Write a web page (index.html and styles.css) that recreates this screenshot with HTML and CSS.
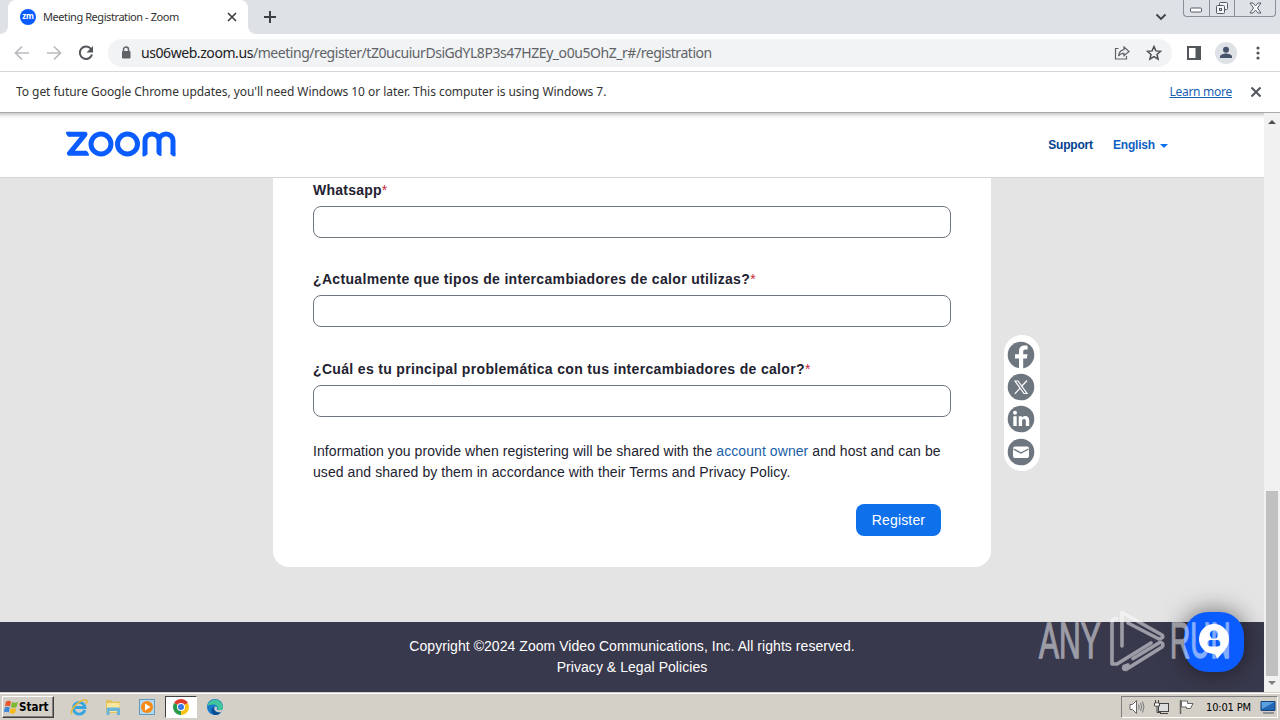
FILE: index.html
```html
<!DOCTYPE html>
<html lang="en">
<head>
    <meta charset="UTF-8">
    <title>Meeting Registration - Zoom</title>
    <link rel="stylesheet" href="styles.css">
</head>
<body>
    <!-- Browser tabs -->
    <div class="tab-strip">
        <div class="tab-prev"></div>
        <div class="tab">
            <span class="favicon">zm</span>
            <span class="tab-title">Meeting Registration - Zoom</span>
            <svg class="tab-close" width="10" height="10" viewBox="0 0 10 10"><path d="M1 1l8 8M9 1L1 9" stroke="#3c4043" stroke-width="1.7"/></svg>
        </div>
        <div class="tab-next"><svg width="12" height="12" viewBox="0 0 12 12"><path d="M6 0v12M0 6h12" stroke="#3c4043" stroke-width="2"/></svg></div>
        <svg class="tab-search" width="12" height="8" viewBox="0 0 12 8"><path d="M1.5 1.5L6 6l4.500-4.500" fill="none" stroke="#3c4043" stroke-width="1.8"/></svg>
        <div class="win-btns">
            <div class="win-btn"><svg width="13" height="6" viewBox="0 0 13 6"><rect x=".5" y="1" width="11" height="4" rx="1" fill="#fff" stroke="#555b66"/></svg></div>
            <div class="win-btn"><svg width="14" height="14" viewBox="0 0 14 14"><g fill="#f4f5f7" stroke="#555b66"><rect x="4.500" y="1.500" width="8" height="7" rx="1"/><rect x="1.500" y="4.500" width="8" height="8" rx="1"/><rect x="4.500" y="7.500" width="2" height="2"/></g></svg></div>
            <div class="win-btn win-close"><svg width="13" height="12" viewBox="0 0 13 12"><path d="M1 1h3l2.500 3L9 1h3L8.500 6l3.500 5H9L6.500 8 4 11H1l3.500-5z" fill="#fff" stroke="#555b66"/></svg></div>
        </div>
    </div>

    <!-- Address bar -->
    <div class="toolbar">
        <svg class="nav-icon" width="16" height="16" viewBox="0 0 16 16"><path d="M15 8H2M8 1.500L1.500 8 8 14.500" fill="none" stroke="#b8babd" stroke-width="1.700"/></svg>
        <svg class="nav-icon" width="16" height="16" viewBox="0 0 16 16"><path d="M1 8h13M8 1.500L14.500 8 8 14.500" fill="none" stroke="#b8babd" stroke-width="1.700"/></svg>
        <svg class="nav-icon" width="16" height="16" viewBox="0 0 16 16"><path d="M13 4A6.200 6.200 0 1 0 14 9.500" fill="none" stroke="#53565a" stroke-width="2"/><path d="M15 1v6.500H8.500z" fill="#53565a"/></svg>
        <div class="url-box">
            <svg width="10" height="14" viewBox="0 0 10 14"><path d="M2.500 6V3.500a2.500 2.500 0 0 1 5 0V6" fill="none" stroke="#5f6368" stroke-width="1.500"/><rect x="1" y="5" width="8.500" height="7.500" rx="1" fill="#5f6368"/></svg>
            <div class="url"><span class="host">us06web.zoom.us</span><span class="path">/meeting/register/tZ0ucuiurDsiGdYL8P3s47HZEy_o0u5OhZ_r#/registration</span></div>
            <svg class="share" width="16" height="16" viewBox="0 0 16 16"><path d="M4.500 3.500H1.500V14h11v-3" fill="none" stroke="#5f6368" stroke-width="1.200"/><path d="M10 2l5 4.500-5 4.300V8.300C7.500 8.200 5.800 9 4.500 11 5 7.500 6.800 5.200 10 4.700z" fill="none" stroke="#5f6368" stroke-width="1.200"/></svg>
            <svg width="16" height="16" viewBox="0 0 16 16"><path d="M8 1.500l1.900 4.400 4.700.4-3.600 3.100 1.100 4.700L8 11.600l-4.100 2.500L5 9.400 1.400 6.300l4.700-.4z" fill="none" stroke="#4d5156" stroke-width="1.500"/></svg>
        </div>
        <svg class="panel-icon" width="14" height="14" viewBox="0 0 14 14"><rect x="1" y="1" width="12" height="12" fill="none" stroke="#53565a" stroke-width="2"/><path d="M8.500 1H13v12H8.500z" fill="#53565a"/></svg>
        <svg class="avatar" width="22" height="22" viewBox="0 0 22 22"><circle cx="11" cy="11" r="11" fill="#dee1e6"/><circle cx="11" cy="7.800" r="3" fill="#47536b"/><path d="M5 16v-1.500c0-2 4-3 6-3s6 1 6 3V16z" fill="#47536b"/></svg>
        <svg class="dots" width="4" height="14" viewBox="0 0 4 14"><g fill="#53565a"><circle cx="2" cy="2" r="1.600"/><circle cx="2" cy="7" r="1.600"/><circle cx="2" cy="12" r="1.600"/></g></svg>
    </div>

    <div class="infobar">
        <span class="info-text">To get future Google Chrome updates, you'll need Windows 10 or later. This computer is using Windows 7.</span>
        <a class="learn-more">Learn more</a>
        <svg width="12" height="12" viewBox="0 0 12 12"><path d="M1.500 1.500l9 9M10.500 1.500l-9 9" stroke="#53565a" stroke-width="2"/></svg>
    </div>

    <div class="viewport">
        <div class="page">
            <header class="header">
                <svg class="logo" width="110" height="26" viewBox="0 0 110 26">
                    <g fill="none" stroke="#0b5cff" stroke-width="5">
                        <path d="M2.500 3.300H19L3.500 22.300H20" stroke-linejoin="round"/>
                        <circle cx="35" cy="13" r="10"/>
                        <circle cx="61.500" cy="13" r="10"/>
                        <path d="M79 23V9.500a7 6.500 0 0 1 14 0v11M93 9.500a7 6.500 0 0 1 14 0V23"/>
                    </g>
                    <path d="M0 .8h4v5C1.500 5.800 0 4 0 .8zM19 19.800c2.500 0 4 2 4 5h-4zM76.500 22h5c0 2.200-2 3.500-5 3.500zM104.500 22h5v3.500c-3 0-5-1.300-5-3.500zM90.500 20h5v5c-3 0-5-1.800-5-4z" fill="#0b5cff"/>
                </svg>
                <a class="support">Support</a>
                <a class="language">English</a>
                <span class="caret"></span>
            </header>

            <main class="main">
                <div class="card">
                    <div class="field">
                        <label>Whatsapp<span class="req">*</span></label>
                        <input type="text">
                    </div>
                    <div class="field field-2">
                        <label class="question">¿Actualmente que tipos de intercambiadores de calor utilizas?<span class="req">*</span></label>
                        <input type="text">
                    </div>
                    <div class="field field-3">
                        <label class="question">¿Cuál es tu principal problemática con tus intercambiadores de calor?<span class="req">*</span></label>
                        <input type="text">
                    </div>
                    <p class="notice">Information you provide when registering will be shared with the <a>account owner</a> and host and can be<br>used and shared by them in accordance with their Terms and Privacy Policy.</p>
                    <button class="register">Register</button>
                </div>

                <div class="share-bar">
                    <svg width="28" height="28" viewBox="0 0 28 28"><circle cx="14" cy="14" r="13.300" fill="#6e7680"/><path d="M12 28V17.500H8v-4.200h4v-3c0-4 2.200-5.900 5.600-5.900 1.500 0 2.500.2 3 .3v3.900h-2c-1.800 0-2.400.8-2.400 2.200v2.500h4.300l-.7 4.200h-3.600V28z" fill="#fff"/></svg>
                    <svg width="28" height="28" viewBox="0 0 28 28"><circle cx="14" cy="14" r="13.300" fill="#6e7680"/><path d="M8 8h3l9 12.500h-3z" fill="none" stroke="#fff" stroke-width="1.200"/><path d="M20 7.500l-5.500 6M13 15.200L7.800 20.800" stroke="#fff" stroke-width="1.200"/></svg>
                    <svg class="linkedin" width="28" height="28" viewBox="0 0 28 28"><circle cx="14" cy="14" r="13.300" fill="#6e7680"/><g fill="#fff"><circle cx="8" cy="7.800" r="2"/><path d="M6.300 11.200h3.400V21H6.300zM11.700 11.200h3.200v1.400c.8-1.200 1.900-1.700 3.200-1.700 2.900 0 4.100 1.700 4.100 4.600V21h-3.400v-4.900c0-1.500-.5-2.200-1.600-2.200-1.300 0-2.100.9-2.100 2.200V21h-3.400z"/></g></svg>
                    <svg width="28" height="28" viewBox="0 0 28 28"><circle cx="14" cy="14" r="13.300" fill="#6e7680"/><rect x="6" y="8.500" width="16" height="11.500" rx="2" fill="#fff"/><path d="M6.500 11l7.500 4 7.500-4" fill="none" stroke="#6e7680" stroke-width="1.400"/></svg>
                </div>
            </main>

            <footer class="footer">
                <div class="copyright">Copyright ©2024 Zoom Video Communications, Inc. All rights reserved.</div>
                <div class="policies">Privacy &amp; Legal Policies</div>
            </footer>

            <div class="chat-btn">
                <svg width="32" height="36" viewBox="0 0 32 36"><path d="M16 1a15 15 0 0 1 15 15c0 8-5 12-12 20l-2-5h-1A15 15 0 0 1 16 1z" fill="#fff"/><circle cx="16" cy="11.500" r="4.200" fill="#0b5cff"/><rect x="9.500" y="17" width="13" height="6.500" rx="3.200" fill="#0b5cff"/></svg>
            </div>
            <div class="watermark">
                <span class="mark-text">ANY</span>
                <svg width="57" height="64" viewBox="0 0 57 64"><g fill="none" stroke="#fff" stroke-width="3.600" stroke-linejoin="round" stroke-linecap="round"><path d="M13 37V3.500l40 22.500q2.500 3-3 4L19 14"/><path d="M7.500 9.500Q3 10 3 13.500V55h5l34-21"/><path d="M19 56l-4 1.500q-1.500 3 2 3L53 38q2.500-3-1.500-5L24 49.500"/></g></svg>
                <span class="mark-text run">RUN</span>
            </div>
        </div>
        <div class="scrollbar">
            <span class="arrow-up"></span>
            <div class="thumb"></div>
            <span class="arrow-down"></span>
        </div>
    </div>

    <!-- Windows taskbar -->
    <div class="taskbar">
        <div class="start">
            <svg width="16" height="16" viewBox="0 0 16 16"><path d="M3 2.500c2-1 3.500-1 5 0L7 7.500c-1.500-1-3-1-5 0z" fill="#e8562a"/><path d="M9 3c2 1 3.500 1 6 0l-1.500 5c-2 1-4 1-5.500 0z" fill="#7db72f"/><path d="M1.800 8.500c2-1 3.500-1 5 0l-1 5c-1.500-1-3-1-5 0z" fill="#3f87d9"/><path d="M7.800 9c2 1 3.500 1 5.500 0L12 14c-2 1-3.500 1-5.300 0z" fill="#f6b91d"/></svg>
            <span>Start</span>
        </div>
        <div class="task">
            <svg width="18" height="18" viewBox="0 0 18 18"><path d="M14.800 12A5.800 5.800 0 1 1 15 9.500H5" fill="none" stroke="#36a5de" stroke-width="2.800"/><path d="M2 16C-1 12 10 1 16 2c1.500.5 1 2.500 0 4" fill="none" stroke="#e8b93b" stroke-width="1.500"/></svg>
        </div>
        <div class="task">
            <svg width="18" height="18" viewBox="0 0 18 18"><path d="M2 2h5l1 1.500h8V15H2z" fill="#e3c15e"/><path d="M3 5h12.500v9H3z" fill="#f8e79c"/><path d="M2.500 17v-6q0-1.500 1.500-1.500h10.500Q16 9.500 16 11v6h-3v-4H5.500v4z" fill="#68b5d9"/></svg>
        </div>
        <div class="task">
            <svg width="18" height="18" viewBox="0 0 18 18"><rect x="1.500" y="1.500" width="15" height="15" fill="#b9d7ec" stroke="#5c9cc7"/><circle cx="9" cy="9" r="6" fill="#f48b16"/><path d="M7 5.500l5.500 3.500L7 12.500z" fill="#fff"/></svg>
        </div>
        <div class="task active">
            <svg width="18" height="18" viewBox="0 0 18 18"><path d="M9 9L2.100 5A8 8 0 0 1 15.900 5z" fill="#e33b2e"/><path d="M9 9l6.900-4A8 8 0 0 1 9 17z" fill="#fbc116"/><path d="M9 9v8A8 8 0 0 1 2.100 5z" fill="#269a48"/><circle cx="9" cy="9" r="4" fill="#fff"/><circle cx="9" cy="9" r="3" fill="#3b78e7"/></svg>
        </div>
        <div class="task">
            <svg width="18" height="18" viewBox="0 0 18 18"><circle cx="9" cy="9" r="8" fill="#1679c9"/><path d="M1.500 7A8 8 0 0 1 17 9c0 3-3 4-5.500 3C13 9 10 6 6.500 6.500 4 7 2 8 1.500 7z" fill="#41c59b"/><path d="M8 9c-1 3 1.500 6 7 5.500A8 8 0 0 1 9 17c-4-1-5-6-1-8z" fill="#0c4c93"/><path d="M9 8.500c2 0 2.500 1 1.500 3 1.500 1 4 1 7-.5l-2.500 3c-5 1-8-2.500-6-5.500z" fill="#d4d0c8"/></svg>
        </div>
        <div class="tray">
            <svg width="16" height="16" viewBox="0 0 16 16"><path d="M1 5.500h2.500L7.500 1.500v13l-4-4H1z" fill="#fff" stroke="#666"/><path d="M9.500 5.500q1.500 2.500 0 5M11.500 4q2.500 4 0 8M13.500 2.500q3 5.500 0 11" fill="none" stroke="#777"/></svg>
            <svg width="17" height="16" viewBox="0 0 17 16"><rect x="5.500" y="4.500" width="10" height="8" fill="#ddd" stroke="#444"/><path d="M7 14.500h8M2.500 1v3M5.500 1v3M1.500 4h5v3h-5zM4 7v6.500h4" fill="none" stroke="#444"/><path d="M2 4.500h4v2H2z" fill="#fff"/></svg>
            <svg width="17" height="16" viewBox="0 0 17 16"><path d="M2.500 1v14" stroke="#666" stroke-width="1.500"/><path d="M3.500 2h6v2.500h5.500l-2.500 5H8.500V8h-5z" fill="#fff" stroke="#666"/></svg>
            <span class="clock">10:01 PM</span>
            <svg width="16" height="14" viewBox="0 0 16 14"><path d="M1 1.500h14v9H1z" fill="#2365b5" stroke="#16437c"/><path d="M1.500 2h13L2 9z" fill="#5ba1df"/><path d="M3 13h11" stroke="#456"/></svg>
        </div>
    </div>
</body>
</html>
```
FILE: styles.css
```css
* {
    box-sizing: border-box;
}
body {
    margin: 0;
    height: 720px;
    display: flex;
    flex-direction: column;
    overflow: hidden;
    background: #fff;
    font-family: "Liberation Sans", Arial, sans-serif;
}
svg {
    display: block;
    flex-shrink: 0;
}

/* Browser tabs */
.tab-strip {
    height: 34px;
    display: flex;
    background: #fff;
    font-family: "Noto Sans", Tahoma, sans-serif;
}
.tab-prev {
    width: 8px;
    background: #dee1e6;
    border-bottom-right-radius: 8px;
}
.tab {
    width: 240px;
    display: flex;
    align-items: center;
    padding: 0 11px 0 12px;
    background: linear-gradient(#dee1e6 8px, #fff 8px);
    position: relative;
}
.tab::before {
    content: "";
    position: absolute;
    inset: 0;
    background: #fff;
    border-radius: 8px 8px 0 0;
}
.tab > * {
    position: relative;
}
.favicon {
    width: 16px;
    height: 16px;
    border-radius: 50%;
    background: #0b5cff;
    color: #fff;
    font-size: 8px;
    font-weight: bold;
    line-height: 14px;
    text-align: center;
}
.tab-title {
    margin: -2px 0 0 7px;
    font-size: 11px;
    letter-spacing: -0.43px;
    color: #333;
    white-space: nowrap;
}
.tab-close {
    margin-left: auto;
}
.tab-next {
    flex: 1;
    padding: 11px 0 0 16px;
    background: #dee1e6;
    border-bottom-left-radius: 8px;
}
.tab-search {
    width: 28px;
    height: 34px;
    padding: 0 16px 0 0;
    background: #dee1e6;
}
.win-btns {
    width: 97px;
    display: flex;
    align-items: flex-start;
    background: #dee1e6;
}
.win-btn {
    width: 25px;
    height: 17px;
    display: flex;
    align-items: center;
    justify-content: center;
    border: 1px solid #8b8f97;
    border-width: 0 0 1px 1px;
}
.win-btn:first-child {
    width: 26px;
    padding-top: 4px;
    border-bottom-left-radius: 4px;
}
.win-close {
    width: 42px;
    border-right-width: 1px;
    border-bottom-right-radius: 4px;
}

/* Address bar */
.toolbar {
    height: 38px;
    display: flex;
    align-items: center;
    padding: 0 20px 0 14px;
    border-bottom: 1px solid #d5d7da;
    font-family: "Noto Sans", Tahoma, sans-serif;
}
.nav-icon {
    margin-right: 16px;
}
.url-box {
    width: 1064px;
    height: 28px;
    display: flex;
    align-items: center;
    gap: 10px;
    margin-left: -2px;
    padding: 0 10px 0 13px;
    border-radius: 14px;
    background: #f1f3f4;
}
.url {
    flex: 1;
    font-size: 14px;
    white-space: nowrap;
}
.host {
    color: #202124;
    letter-spacing: -0.43px;
}
.path {
    color: #5f6368;
    letter-spacing: -0.45px;
}
.share {
    margin-right: 6px;
}
.panel-icon {
    margin-left: 15px;
}
.avatar {
    margin-left: 14px;
}
.dots {
    margin-left: auto;
}

.infobar {
    height: 41px;
    display: flex;
    align-items: center;
    padding: 0 18px 0 16px;
    border-bottom: 1px solid #aaa;
    font-family: "Noto Sans", Tahoma, sans-serif;
    font-size: 12px;
    color: #333;
}
.info-text {
    margin-top: -2px;
    letter-spacing: -0.05px;
}
.learn-more {
    margin: -2px 18px 0 auto;
    color: #1a5fb4;
    text-decoration: underline;
    letter-spacing: -0.27px;
}

/* Web page */
.viewport {
    flex: 1;
    display: flex;
    min-height: 0;
}
.page {
    width: 1264px;
    display: flex;
    flex-direction: column;
    position: relative;
}
.header {
    height: 65px;
    display: flex;
    align-items: center;
    padding: 0 96px 2px 66px;
    border-bottom: 1px solid #d6d6d6;
    background: linear-gradient(#c8c8c8, #f0f0f0 3px, #fff 6px);
    font-size: 12px;
    font-weight: bold;
    letter-spacing: -0.18px;
}
.support {
    margin: 2px 20px 0 auto;
    color: #00408f;
}
.language {
    margin-top: 2px;
    color: #0e60c5;
}
.caret {
    margin: 3px 0 0 5px;
    border: 4px solid transparent;
    border-top-color: #0e71eb;
    border-bottom: 0;
}
.main {
    height: 444px;
    display: flex;
    align-items: flex-start;
    padding-left: 273px;
    background: #e4e4e4;
}
.card {
    width: 718px;
    height: 389px;
    padding: 2px 40px 0;
    border-radius: 0 0 16px 16px;
    background: #fff;
}
.field label {
    display: block;
    height: 26px;
    line-height: 20px;
    font-size: 14px;
    font-weight: bold;
    color: #222230;
    white-space: nowrap;
    letter-spacing: 0.23px;
}
.field .question {
    letter-spacing: 0.33px;
}
.req {
    color: #c8283c;
    font-weight: normal;
}
.field input {
    display: block;
    width: 638px;
    height: 32px;
    border: 1px solid #6e7680;
    border-radius: 8px;
    background: #fff;
}
.field-2 {
    margin-top: 31px;
}
.field-3 {
    margin-top: 32px;
}
.notice {
    margin: 24px 0 21px;
    font-size: 14px;
    line-height: 21px;
    color: #222230;
    white-space: nowrap;
    letter-spacing: 0.075px;
}
.notice a {
    color: #1a5fa8;
}
.register {
    display: block;
    width: 85px;
    height: 32px;
    margin: 0 10px 0 auto;
    padding: 0;
    border: none;
    border-radius: 8px;
    background: #0e71eb;
    color: #fff;
    font: 14px "Liberation Sans", Arial, sans-serif;
    letter-spacing: 0.15px;
}
.share-bar {
    width: 36px;
    height: 136px;
    display: flex;
    flex-direction: column;
    align-items: center;
    gap: 4.300px;
    margin: 157px 0 0 13px;
    padding: 6px 2px 0 0;
    border-radius: 18px;
    background: #fff;
}
.linkedin {
    margin: -1px 0 1px;
}
.footer {
    height: 70px;
    padding-top: 14px;
    background: #39394d;
    color: #fff;
    font-size: 14px;
    line-height: 21px;
    text-align: center;
    letter-spacing: 0.05px;
}
.chat-btn {
    position: absolute;
    left: 1184px;
    top: 499px;
    width: 60px;
    height: 60px;
    padding: 11px 0 0 14px;
    border-radius: 24px;
    background: #0b5cff;
    box-shadow: 0 0 24px rgba(0, 0, 0, 0.55);
}
.watermark {
    position: absolute;
    left: 1039px;
    top: 496px;
    display: flex;
    align-items: center;
    gap: 8px;
    opacity: 0.5;
}
.mark-text {
    width: 62px;
    color: #fff;
    font-size: 50px;
    line-height: 64px;
    transform: scaleX(0.600);
    transform-origin: left;
    -webkit-text-stroke: 1.3px #fff;
}
.run {
    margin-left: -4px;
    transform: scaleX(0.560);
}

.scrollbar {
    width: 16px;
    display: flex;
    flex-direction: column;
    align-items: center;
    background: #f1f1f1;
}
.arrow-up {
    margin-top: 7px;
    border: 4px solid transparent;
    border-bottom-color: #505050;
    border-top: 0;
}
.thumb {
    width: 12px;
    height: 185px;
    margin-top: 367px;
    background: #c1c1c1;
}
.arrow-down {
    margin-top: 5px;
    border: 4px solid transparent;
    border-top-color: #808080;
    border-bottom: 0;
}

/* Windows taskbar */
.taskbar {
    height: 28px;
    display: flex;
    align-items: flex-start;
    padding: 3px 2px 0;
    border-top: 1px solid #d4d0c8;
    background: #d4d0c8;
    box-shadow: inset 0 1px #fff;
    font-family: "DejaVu Sans Condensed", Tahoma, sans-serif;
    font-size: 11px;
    color: #000;
}
.start {
    width: 52px;
    height: 22px;
    display: flex;
    align-items: center;
    margin-right: 9px;
    border: 1px solid;
    border-color: #fff #404040 #404040 #fff;
    box-shadow: inset -1px -1px #808080;
    font-weight: bold;
}
.start span {
    font-size: 11.500px;
}
.task {
    width: 32px;
    height: 22px;
    display: flex;
    align-items: center;
    justify-content: center;
    margin-right: 2px;
}
.active {
    border: 1px solid;
    border-color: #404040 #fff #fff #404040;
    background: #fff;
}
.tray {
    width: 157px;
    height: 22px;
    display: flex;
    align-items: center;
    gap: 8px;
    margin-left: auto;
    padding-left: 7px;
    border: 1px solid;
    border-color: #808080 #fff #fff #808080;
}
.clock {
    width: 46px;
    margin-left: 3px;
    white-space: nowrap;
    letter-spacing: -0.15px;
}
```
